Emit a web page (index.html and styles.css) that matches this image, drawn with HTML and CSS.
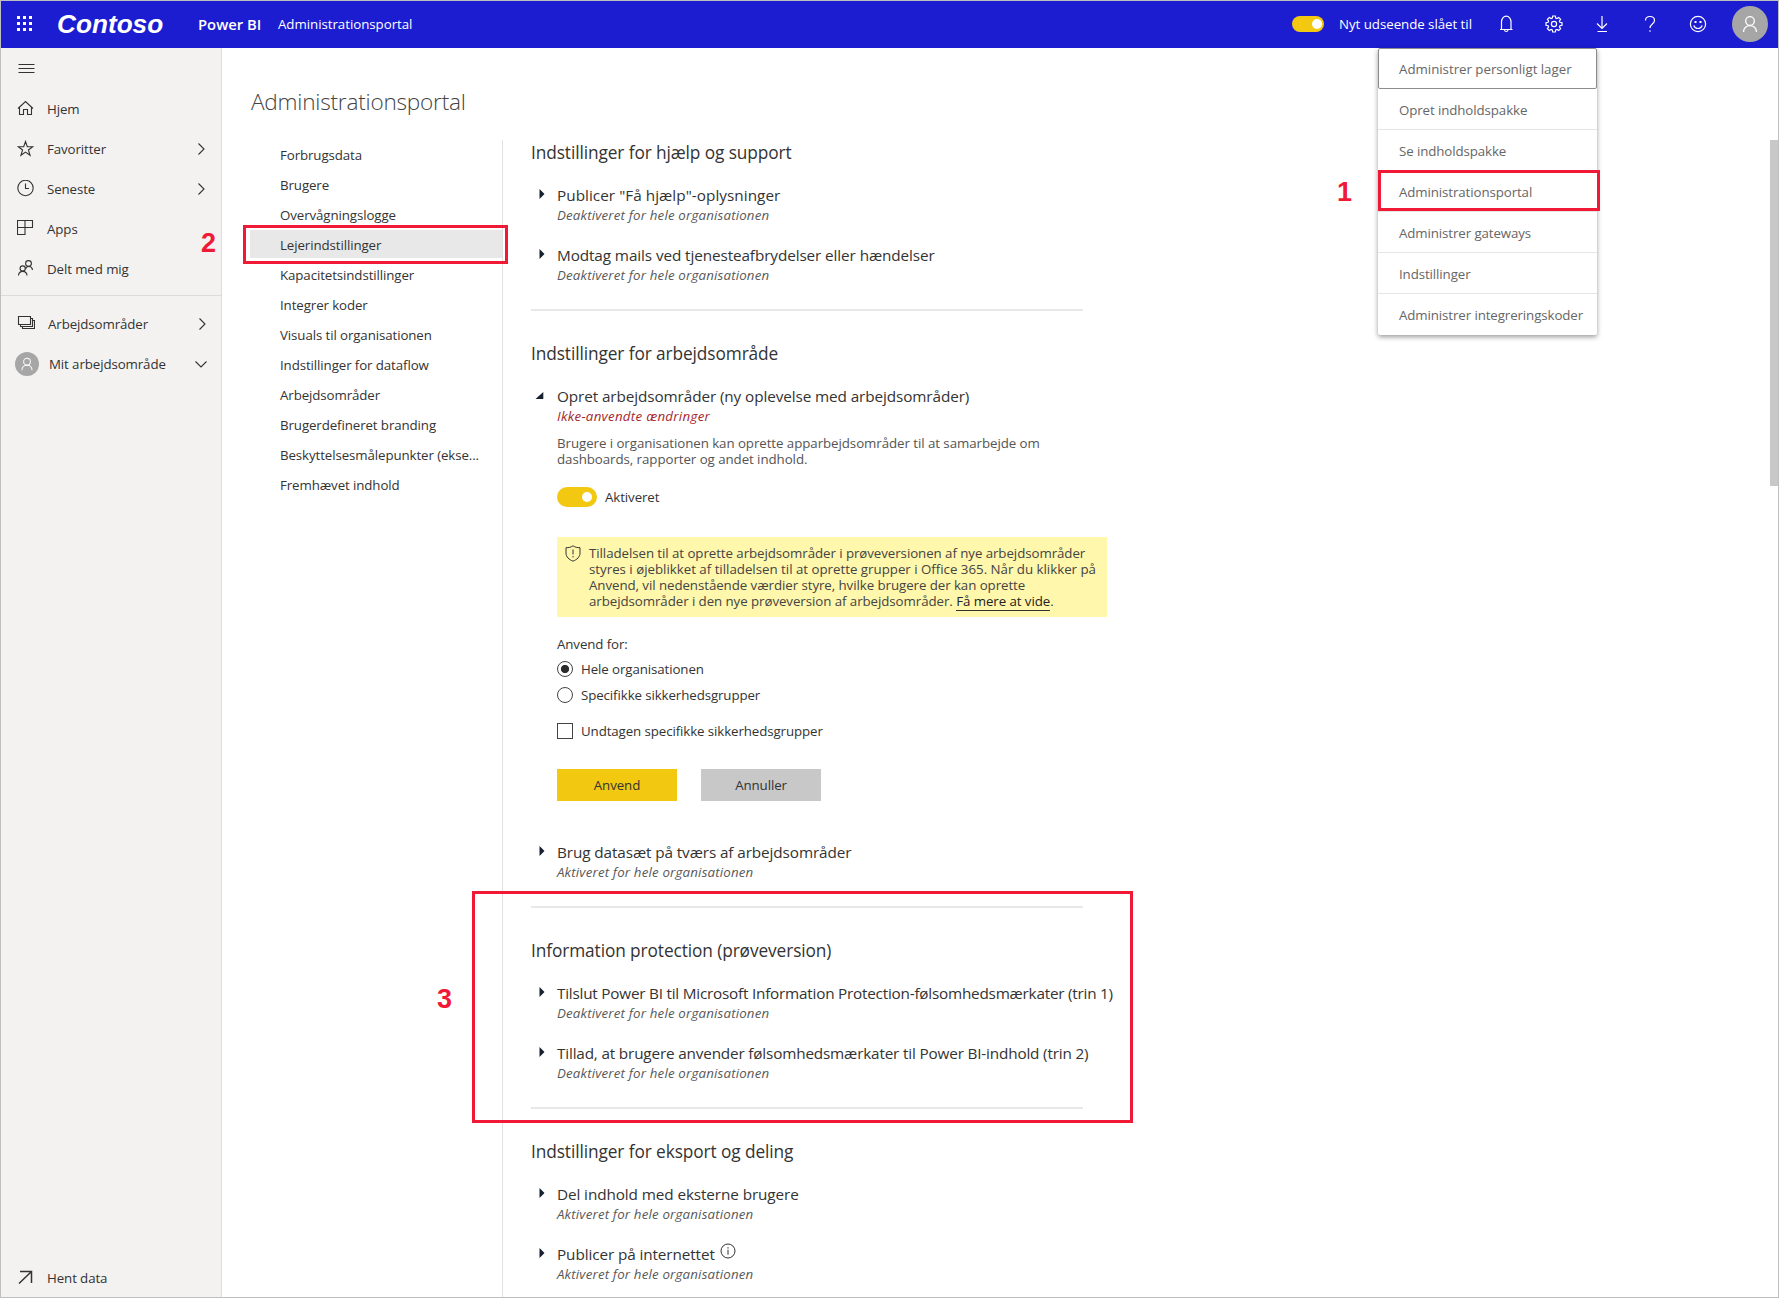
FILE: index.html
```html
<!DOCTYPE html>
<html lang="da">
<head>
<meta charset="utf-8">
<title>Administrationsportal - Power BI</title>
<link rel="stylesheet" href="styles.css">
</head>
<body>
<svg class="defs" width="0" height="0" aria-hidden="true">
  <symbol id="closed" viewBox="0 0 26 20"><path d="M8.5 4v10l5-5z" fill="#17202e"/></symbol>
  <symbol id="open" viewBox="0 0 26 20"><path d="M12.3 6v7H4.5z" fill="#17202e"/></symbol>
  <symbol id="right" viewBox="0 0 14 14"><path d="M4.500 1.500 10 7l-5.500 5.500"/></symbol>
  <symbol id="person" viewBox="0 0 18 18"><circle cx="9" cy="6" r="4.300"/><path d="M2.500 17C2.500 8.500 15.500 8.500 15.500 17"/></symbol>
</svg>
<div class="app">
  <header class="topbar">
    <svg class="waffle" width="16" height="16" viewBox="0 0 16 16"><path d="M0 0h3v3H0zM6 0h3v3H6zM12 0h3v3h-3zM0 6h3v3H0zM6 6h3v3H6zM12 6h3v3h-3zM0 12h3v3H0zM6 12h3v3H6zM12 12h3v3h-3z" fill="#fff"/></svg>
    <span class="brand">Contoso</span>
    <span class="product">Power BI</span>
    <span class="crumb">Administrationsportal</span>
    <div class="tools">
      <span class="switch small"></span>
      <span class="look">Nyt udseende slået til</span>
      <svg class="ico" viewBox="0 0 18 18"><path d="M3 14.500h12.500M4.500 14.500V7a4.500 5.500 0 0 1 9.500 0v7.500M7.500 15c.3 2 3.200 2 3.500 0"/></svg>
      <svg class="ico" viewBox="0 0 18 18"><path d="M7.700 1h2.600l.4 2.100 1.200.5 1.800-1.200 1.900 1.900-1.200 1.800.5 1.200 2.100.4v2.600l-2.100.4-.5 1.200 1.200 1.800-1.900 1.900-1.800-1.200-1.200.5-.4 2.100H7.700l-.4-2.100-1.200-.5-1.800 1.200-1.900-1.900 1.200-1.800-.5-1.200L1 10.300V7.700l2.100-.4.5-1.200-1.200-1.800 1.900-1.900 1.800 1.200 1.200-.5z"/><circle cx="9" cy="9" r="2.600"/></svg>
      <svg class="ico" viewBox="0 0 18 18"><path d="M9 1v12M4 8.500l5 5 5-5M4.500 16.500h9.500"/></svg>
      <svg class="ico" viewBox="0 0 18 18"><path d="M4.500 5.500C4.500 2.500 6.500 1.500 9 1.500s4.500 1.300 4.500 4c0 3.500-4.500 3.500-4.500 7.500M9 15.200v1.600"/></svg>
      <svg class="ico" viewBox="0 0 18 18"><circle cx="9" cy="9" r="7.600"/><path d="M4.800 10.500c1.500 4 6.900 4 8.400 0"/><path d="M5.500 6h2v2h-2zM10.500 6h2v2h-2z" fill="#fff" stroke="none"/></svg>
      <span class="avatar"><svg width="18" height="18"><use href="#person"/></svg></span>
    </div>
  </header>

  <div class="body">
    <nav class="side">
      <a class="row"><svg class="gl" viewBox="0 0 18 18"><path d="M1.500 4.500h16M1.500 8.500h16M1.500 12.500h16"/></svg></a>
      <a class="row"><svg class="gl" viewBox="0 0 18 18"><path d="M1 8.500 8.500 1.500 16 8.500M2.500 7.500v7h4V9.500h4v5h4v-7"/></svg><span>Hjem</span></a>
      <a class="row"><svg class="gl" viewBox="0 0 18 18"><path d="M8.500 1.500 10.300 6.700h5.400l-4.300 3.300 1.700 5.300-4.600-3.200-4.600 3.200 1.700-5.300L1.300 6.700h5.400z"/></svg><span>Favoritter</span><svg class="chev"><use href="#right"/></svg></a>
      <a class="row"><svg class="gl" viewBox="0 0 18 18"><circle cx="8.500" cy="8" r="7.700"/><path d="M8.500 3.500v5h3.500"/></svg><span>Seneste</span><svg class="chev"><use href="#right"/></svg></a>
      <a class="row"><svg class="gl" viewBox="0 0 18 18"><path d="M.5.500h15v7H.5zM8 .5v14H.5v-14"/></svg><span>Apps</span></a>
      <a class="row"><svg class="gl" viewBox="0 0 18 18"><circle cx="11.500" cy="3.500" r="2.900"/><path d="M8.500 9c1-3.500 6.500-3.300 7 1"/><circle cx="5.700" cy="8.500" r="2.600"/><path d="M1.500 15.500c.5-5.500 8-5.500 8.500 0"/></svg><span>Delt med mig</span></a>
      <hr>
      <a class="row ws"><svg class="gl" viewBox="0 0 18 18"><path d="M1.500 1.500h12v8h-12zM3.500 9.500v2h12v-8h-2M5.500 11.500v2h12v-8h-2"/></svg><span>Arbejdsområder</span><svg class="chev"><use href="#right"/></svg></a>
      <a class="row mine"><span class="avatar mini"><svg width="14" height="14"><use href="#person"/></svg></span><span>Mit arbejdsområde</span><svg class="chev" viewBox="0 0 14 14"><path d="M1.500 4.500 7 10l5.500-5.500"/></svg></a>
      <a class="row last"><svg class="gl" viewBox="0 0 18 18"><path class="bold" d="M3 2.500h11.500V14M14.500 2.500 2 14.500"/></svg><span>Hent data</span></a>
    </nav>

    <main class="main">
      <h1>Administrationsportal</h1>
      <div class="cols">
        <ul class="tabs">
          <li>Forbrugsdata</li>
          <li>Brugere</li>
          <li>Overvågningslogge</li>
          <li class="on">Lejerindstillinger</li>
          <li>Kapacitetsindstillinger</li>
          <li>Integrer koder</li>
          <li>Visuals til organisationen</li>
          <li>Indstillinger for dataflow</li>
          <li>Arbejdsområder</li>
          <li>Brugerdefineret branding</li>
          <li>Beskyttelsesmålepunkter (ekse...</li>
          <li>Fremhævet indhold</li>
        </ul>
        <div class="settings">
          <section>
            <h2>Indstillinger for hjælp og support</h2>
            <article><svg class="tri"><use href="#closed"/></svg><div><h3 class="help">Publicer "Få hjælp"-oplysninger</h3><p class="state">Deaktiveret for hele organisationen</p></div></article>
            <article><svg class="tri"><use href="#closed"/></svg><div><h3>Modtag mails ved tjenesteafbrydelser eller hændelser</h3><p class="state">Deaktiveret for hele organisationen</p></div></article>
          </section>
          <section>
            <h2>Indstillinger for arbejdsområde</h2>
            <article class="expanded"><svg class="tri"><use href="#open"/></svg>
              <div>
                <h3>Opret arbejdsområder (ny oplevelse med arbejdsområder)</h3>
                <p class="state dirty">Ikke-anvendte ændringer</p>
                <p class="desc">Brugere i organisationen kan oprette apparbejdsområder til at samarbejde om<br>dashboards, rapporter og andet indhold.</p>
                <div class="enable"><span class="switch"></span><span>Aktiveret</span></div>
                <div class="notice">
                  <svg width="16" height="17" viewBox="0 0 16 17"><path d="M8 .8C6 2.300 3.500 2.700 1 2.700V8c0 4 3 6.500 7 8.200 4-1.700 7-4.200 7-8.200V2.700C12.500 2.700 10 2.300 8 .8zM8 4.500v5M8 11v1.400"/></svg>
                  <p>Tilladelsen til at oprette arbejdsområder i prøveversionen af nye arbejdsområder<br><span class="wide">styres i øjeblikket af tilladelsen til at oprette grupper i Office 365. Når du klikker på</span><br>Anvend, vil nedenstående værdier styre, hvilke brugere der kan oprette<br>arbejdsområder i den nye prøveversion af arbejdsområder. <a>Få mere at vide</a>.</p>
                </div>
                <p class="applyto">Anvend for:</p>
                <label class="choice"><i class="radio sel"></i><span>Hele organisationen</span></label>
                <label class="choice second"><i class="radio"></i><span>Specifikke sikkerhedsgrupper</span></label>
                <label class="choice except"><i class="check"></i><span>Undtagen specifikke sikkerhedsgrupper</span></label>
                <div class="actions"><button class="primary">Anvend</button><button>Annuller</button></div>
              </div>
            </article>
            <article><svg class="tri"><use href="#closed"/></svg><div><h3>Brug datasæt på tværs af arbejdsområder</h3><p class="state">Aktiveret for hele organisationen</p></div></article>
          </section>
          <section>
            <h2>Information protection (prøveversion)</h2>
            <article><svg class="tri"><use href="#closed"/></svg><div><h3 class="step one">Tilslut Power BI til Microsoft Information Protection-følsomhedsmærkater (trin 1)</h3><p class="state">Deaktiveret for hele organisationen</p></div></article>
            <article><svg class="tri"><use href="#closed"/></svg><div><h3 class="step">Tillad, at brugere anvender følsomhedsmærkater til Power BI-indhold (trin 2)</h3><p class="state">Deaktiveret for hele organisationen</p></div></article>
          </section>
          <section>
            <h2>Indstillinger for eksport og deling</h2>
            <article><svg class="tri"><use href="#closed"/></svg><div><h3>Del indhold med eksterne brugere</h3><p class="state">Aktiveret for hele organisationen</p></div></article>
            <article><svg class="tri"><use href="#closed"/></svg><div><h3 class="withinfo"><span>Publicer på internettet</span><svg width="16" height="16" viewBox="0 0 16 16"><circle cx="8" cy="8" r="7"/><path d="M8 6.700v5M8 4.200v1.400"/></svg></h3><p class="state">Aktiveret for hele organisationen</p></div></article>
          </section>
        </div>
      </div>
    </main>
  </div>

  <ul class="menu">
    <li>Administrer personligt lager</li>
    <li>Opret indholdspakke</li>
    <li>Se indholdspakke</li>
    <li>Administrationsportal</li>
    <li>Administrer gateways</li>
    <li>Indstillinger</li>
    <li>Administrer integreringskoder</li>
  </ul>
  <div class="thumb"></div>

  <div class="mark m1"></div><span class="num n1">1</span>
  <div class="mark m2"></div><span class="num n2">2</span>
  <div class="mark m3"></div><span class="num n3">3</span>
</div>
</body>
</html>
```
FILE: styles.css
```css
* { box-sizing: border-box; }
body, h1, h2, h3, p, ul { margin: 0; padding: 0; font-weight: 400; }
body { background: #fff; font: 13.3px/20px "Open Sans", "Noto Sans", sans-serif; color: #333; letter-spacing: -0.1px; }
ul { list-style: none; }
svg { fill: none; stroke: #333; flex: none; display: block; }
.defs { position: absolute; }
symbol path[fill] { stroke: none; }
.app { position: relative; width: 1779px; height: 1298px; border: 1px solid #bfbfbf; overflow: hidden; display: flex; flex-direction: column; white-space: nowrap; }

.topbar { height: 47px; flex: none; background: #1c1cd0; color: #fff; display: flex; align-items: center; padding: 0 0 1px 16px; }
.waffle { stroke: none; }
.brand { font: italic bold 26.2px/46px "Liberation Sans", Arial, sans-serif; letter-spacing: 0; margin-left: 24px; width: 141px; }
.product { font-size: 14.8px; font-weight: 600; width: 80px; letter-spacing: 0; }
.crumb, .look { letter-spacing: -0.04px; }
.tools { margin-left: auto; display: flex; align-items: center; padding-right: 10px; }
.look { margin: 0 23px 0 15px; width: 135px; }
.ico { width: 18px; height: 18px; margin-right: 30px; stroke: #fff; stroke-width: 1.2; }
.avatar { width: 36px; height: 36px; border-radius: 50%; background: #a6a6a6; display: flex; align-items: center; justify-content: center; margin-left: -5px; }
.avatar svg { stroke: #fff; stroke-width: 1.3; }
.switch { width: 40px; height: 20px; border-radius: 10px; background: #f2c811; display: flex; align-items: center; justify-content: flex-end; padding-right: 5px; }
.switch::after { content: ""; width: 10px; height: 10px; border-radius: 50%; background: #fff; }
.switch.small { width: 32px; height: 16px; padding-right: 2px; }

.body { flex: 1; min-height: 0; display: flex; }
.side { width: 221px; padding-top: 1px; background: #f3f2f1; border-right: 1px solid #dcdcdc; display: flex; flex-direction: column; flex: none; }
.row { height: 40px; display: flex; align-items: center; padding: 0 13px 0 16px; gap: 12px; }
.gl { width: 18px; height: 18px; stroke-width: 1.1; }
.gl .bold { stroke-width: 1.5; }
.chev { width: 14px; height: 14px; margin-left: auto; stroke-width: 1.1; }
.side hr { width: 100%; border: 0; border-top: 1px solid #dcdcdc; margin: 6px 0 8px; }
.ws { gap: 13px; padding-right: 12px; }
.mine { padding-left: 14px; gap: 10px; }
.mini { width: 24px; height: 24px; margin: 0; }
.last { margin: auto 0 -1px; }

.main { padding-left: 28px; flex: 1; }
h1 { font-size: 22.6px; font-weight: 300; line-height: 32px; padding: 38px 0 0 1px; color: #444; height: 92px; letter-spacing: -0.22px; }
.cols { display: flex; height: 1157px; overflow: hidden; }
.tabs { width: 253px; border-right: 1px solid #e1e1e1; }
.tabs li { height: 30px; line-height: 30px; padding-left: 30px; }
.tabs .on { background: linear-gradient(#e8e8e8, #e8e8e8) 0 0 / 100% 28px no-repeat; }
.settings { padding-left: 28px; }
section { padding-bottom: 24px; }
section::after { content: ""; display: block; width: 552px; height: 2px; background: #e8e8e8; margin: 24px 0 6px; }
h2 { font-size: 17.3px; line-height: 26px; margin-bottom: 19px; }
article { display: flex; }
article + article { margin-top: 20px; }
.expanded + article { margin-top: 41px; }
.tri { width: 26px; height: 20px; }
h3 { font-size: 15.3px; line-height: 20px; }
.help { letter-spacing: 0.04px; }
.step { letter-spacing: -0.17px; }
.step.one { letter-spacing: -0.225px; }
.state { font-style: italic; color: #595959; letter-spacing: 0.17px; }
.dirty { color: #a4262c; letter-spacing: 0.29px; }
.desc { margin-top: 9px; line-height: 16px; color: #555; letter-spacing: -0.06px; }
.enable { margin-top: 20px; display: flex; gap: 8px; }
.notice { margin-top: 30px; width: 550px; height: 80px; padding: 8px; background: #fff7ab; display: flex; gap: 8px; line-height: 16px; color: #444; letter-spacing: -0.065px; }
.wide { letter-spacing: -0.01px; }
.notice a { color: #222; border-bottom: 1px solid #333; }
.applyto { margin-top: 17px; }
.choice { margin-top: 5px; height: 20px; display: flex; align-items: center; gap: 8px; }
.second { margin-top: 6px; }
.except { margin-top: 16px; }
.radio, .check { width: 16px; height: 16px; border: 1px solid #444; }
.radio { border-radius: 50%; }
.sel { background: radial-gradient(circle, #2b2b2b 3.7px, transparent 4.5px); }
.actions { margin-top: 28px; display: flex; gap: 24px; }
button { width: 120px; height: 32px; padding: 0; border: 0; background: #c8c8c8; color: #333; font: inherit; letter-spacing: inherit; }
.primary { background: #f2c811; }
.withinfo { display: flex; gap: 5px; }
.withinfo svg { margin-top: -1px; }

.menu { position: absolute; left: 1377px; top: 47px; width: 219px; background: #fff; border-radius: 2px; box-shadow: 0 2px 5px rgba(0,0,0,.4); color: #666; }
.menu li { height: 41px; line-height: 42.5px; padding-left: 21px; border-bottom: 1px solid #e5e5e5; }
.menu li:first-child { border: 1px solid #8c8c8c; border-radius: 2px; padding-left: 20px; line-height: 40px; letter-spacing: -0.02px; }
.menu li:last-child { border: 0; }
.thumb { position: absolute; right: 0; top: 139px; width: 8px; height: 346px; background: #c8c8c8; }
.mark { position: absolute; border: 3px solid #f01a37; }
.m1 { left: 1377px; top: 169px; width: 222px; height: 41px; }
.m2 { left: 242px; top: 224px; width: 265px; height: 39px; }
.m3 { left: 471px; top: 890px; width: 661px; height: 232px; }
.num { position: absolute; font: bold 27px/30px "Liberation Sans", Arial, sans-serif; color: #f01a37; letter-spacing: 0; }
.n1 { left: 1336px; top: 176px; }
.n2 { left: 200px; top: 227px; }
.n3 { left: 436px; top: 983px; }
```
